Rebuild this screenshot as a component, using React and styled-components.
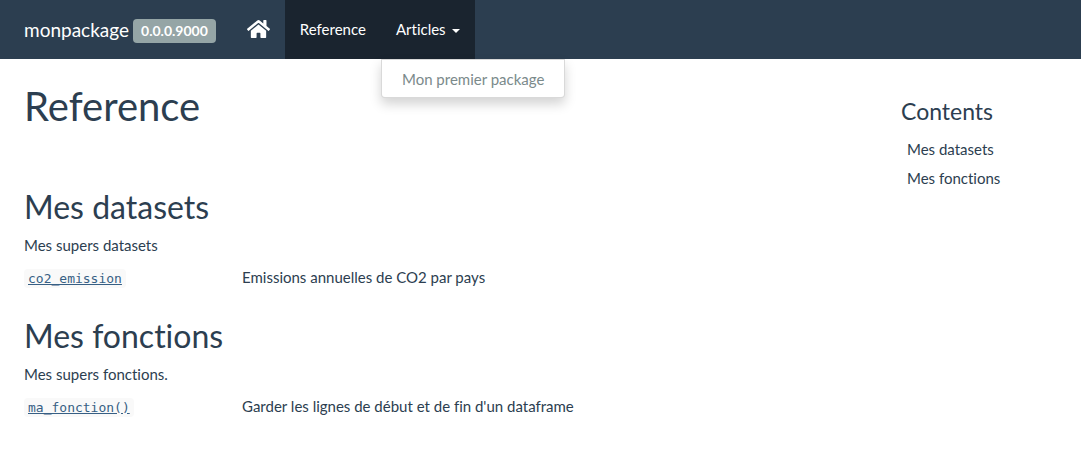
import React from "react";
import styled, { createGlobalStyle } from "styled-components";
import { FaHome } from "react-icons/fa";

const GlobalStyle = createGlobalStyle`
  *, *::before, *::after { box-sizing: border-box; }
  body {
    margin: 0;
    background: #fff;
    color: #2c3e50;
    font-family: Lato, "Liberation Sans", sans-serif;
    font-size: 15px;
    font-variant-ligatures: none;
    line-height: 21px;
  }
`;

const Navbar = styled.nav`
  display: flex;
  background: #2c3e50;
  padding: 0 24px;
  height: 59px;
`;

const Brand = styled.div`
  display: flex;
  align-items: center;
  gap: 4px;
  padding-right: 16px;
  font-size: 19px;
`;

const BrandLink = styled.a`
  color: #fff;
  text-decoration: none;
`;

const Version = styled.span`
  margin-top: 3px;
  padding: 0 8px;
  border-radius: 4px;
  background: #95a5a6;
  color: #fff;
  font-size: 14px;
  font-weight: 700;
  line-height: 24px;
`;

const NavList = styled.ul`
  display: flex;
  margin: 0;
  padding: 0;
  list-style: none;
`;

const NavItem = styled.li`
  position: relative;
  display: flex;
  background: ${(p) => (p.$active ? "#1a242f" : "transparent")};
`;

const NavLink = styled.a`
  display: flex;
  align-items: center;
  padding: 0 15px;
  color: #fff;
  text-decoration: none;

  svg { width: 23px; height: 22px; margin-bottom: 2px; }
`;

const NavButton = styled.button`
  display: flex;
  align-items: center;
  gap: 6px;
  padding: 0 15px;
  border: 0;
  background: none;
  color: #fff;
  font: inherit;
  font-variant-ligatures: none;
  cursor: pointer;

  &::after {
    content: "";
    margin-top: 2px;
    border-top: 4px solid;
    border-right: 4px solid transparent;
    border-left: 4px solid transparent;
  }
`;

const Menu = styled.ul`
  position: absolute;
  top: 100%;
  left: 0;
  margin: 0;
  padding: 5px 0;
  list-style: none;
  background: #fff;
  border: 1px solid rgba(0, 0, 0, 0.15);
  border-radius: 0 0 4px 4px;
  box-shadow: 0 6px 12px rgba(0, 0, 0, 0.175);
`;

const MenuLink = styled.a`
  display: block;
  padding: 4px 20px 2px;
  color: #7b8a8b;
  text-decoration: none;
  white-space: nowrap;
`;

const Page = styled.div`
  display: grid;
  grid-template-columns: minmax(0, 1fr) 156px;
  column-gap: 30px;
  padding: 0 24px;
`;

const Title = styled.h1`
  margin: 26px 0 0;
  font-size: 40px;
  font-weight: 400;
  line-height: 43px;
`;

const Section = styled.section`
  margin-top: ${(p) => (p.$first ? 61 : 27)}px;
`;

const Heading = styled.h2`
  margin: 0 0 10px;
  font-size: 32px;
  font-weight: 400;
  line-height: 36px;
`;

const Text = styled.p`
  margin: 0;
`;

const Topics = styled.table`
  width: 100%;
  margin-top: 9px;
  border-collapse: collapse;
  table-layout: fixed;

  td {
    padding: 2px 0;
    line-height: 21px;
    vertical-align: top;
  }

  td:first-child { width: 218px; }
`;

const Code = styled.code`
  padding: 2px 4px;
  border-radius: 4px;
  background: #f9f9f9;
  font-family: "DejaVu Sans Mono", monospace;
  font-size: 13px;

  a { color: #375f84; text-decoration: underline; }
`;

const Sidebar = styled.aside`
  padding-top: 40px;
`;

const SidebarTitle = styled.h2`
  margin: 0 0 11px;
  font-size: 23px;
  font-weight: 400;
  line-height: 25px;
`;

const TocLink = styled.a`
  display: block;
  padding: 4px 6px;
  color: #2c3e50;
  text-decoration: none;
`;

const sections = [
  { id: "mes-datasets", title: "Mes datasets", text: "Mes supers datasets", topic: "co2_emission", desc: "Emissions annuelles de CO2 par pays" },
  { id: "mes-fonctions", title: "Mes fonctions", text: "Mes supers fonctions.", topic: "ma_fonction()", desc: "Garder les lignes de début et de fin d'un dataframe" },
];

export default function App() {
  return (
    <>
      <GlobalStyle />
      <Navbar>
        <Brand>
          <BrandLink href="#">monpackage</BrandLink>
          <Version>0.0.0.9000</Version>
        </Brand>
        <NavList>
          <NavItem>
            <NavLink href="#" aria-label="Home"><FaHome /></NavLink>
          </NavItem>
          <NavItem $active>
            <NavLink href="#">Reference</NavLink>
          </NavItem>
          <NavItem $active>
            <NavButton type="button" aria-expanded="true">Articles</NavButton>
            <Menu>
              <li><MenuLink href="#">Mon premier package</MenuLink></li>
            </Menu>
          </NavItem>
        </NavList>
      </Navbar>
      <Page>
        <main>
          <Title>Reference</Title>
          {sections.map((s, i) => (
            <Section key={s.id} id={s.id} $first={i === 0}>
              <Heading>{s.title}</Heading>
              <Text>{s.text}</Text>
              <Topics>
                <tbody>
                  <tr>
                    <td><Code><a href="#">{s.topic}</a></Code></td>
                    <td>{s.desc}</td>
                  </tr>
                </tbody>
              </Topics>
            </Section>
          ))}
        </main>
        <Sidebar>
          <SidebarTitle>Contents</SidebarTitle>
          <nav>
            {sections.map((s) => (
              <TocLink key={s.id} href={`#${s.id}`}>{s.title}</TocLink>
            ))}
          </nav>
        </Sidebar>
      </Page>
    </>
  );
}
